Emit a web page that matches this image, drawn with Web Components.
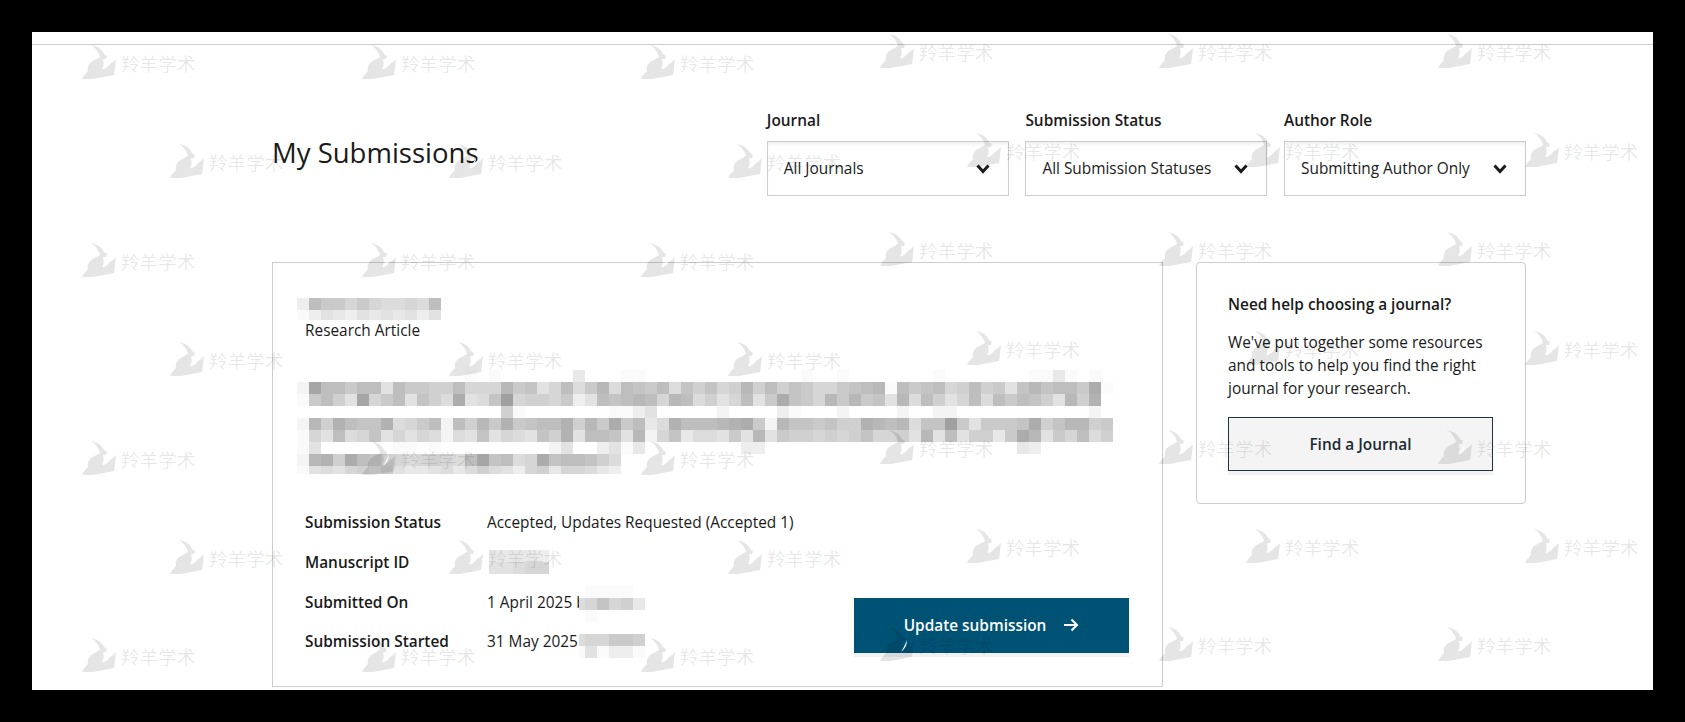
<!DOCTYPE html>
<html lang="en">
<head>
<meta charset="utf-8">
<title>My Submissions</title>
<style>
  html, body { margin: 0; height: 722px; overflow: hidden; background: #000; }
  body { font-family: "Open Sans", "Noto Sans", sans-serif; color: #1a1a1a; }
</style>
</head>
<body>
<page-sheet>
  <page-head slot="head"></page-head>
  <submission-card slot="main"></submission-card>
  <help-card slot="side"></help-card>
</page-sheet>
<script>
// grey ramp for the pixelated blocks: 0-f go from dark to light, w is white
const MOSAIC_KEYS = "0123456789abcdef";
function mosaicColor(ch) {
  const i = MOSAIC_KEYS.indexOf(ch);
  if (i < 0) return "#fff";
  const g = 160 + i * 6;
  return `rgb(${g},${g},${g})`;
}

// title block, one string per row of the pixelated text
const TITLE_ROWS = [
  "wwwwwwwwwwwwwwfwfwwwwwwcwwwffwwwwwwwwwwwwwfwwfwwwwwwwfwwwwwwwffcfwfw",
  "e155755b5778859994 76b95a74a5675a68 6984858679976 54f5765985 87b6465572f",
  "f758b1975b68a2ba6098897db56545945a 8b95b7267947476b4a58b95a57568b483w",
  "wwwwwwwwwwwwwwwww8fwwwwwwwffdbwwwwwewwwwdfwwwewwwwewweewwwwwwwwwwwew",
  "e4835663a975e58473765538 47275ca355 54327e466768834 54a6607b7776286 4487",
  "f9b5a96b9b9aeab6b9ab683b556b4e96ca ab7b4b788989869 98b4b5b88c724b7 95a8",
  "fbwwwwwwffwfwwwwwwwwwebwwdbfcwwwwwwwwddwwwwwwwwwwwwwwwwwwwwwcdwwwwww",
  "e43825689a989a5165a92655 68a",
  "fbab9897bccbaca8abd98c99acd",
].map((r) => r.replace(/ /g, "")).join(" ");

class BlurMosaic extends HTMLElement {
  connectedCallback() {
    const rows = (this.getAttribute("rows") || "").trim().split(/\s+/);
    const heights = (this.getAttribute("heights") || "").split(" ").map(Number);
    const cell = Number(this.getAttribute("cell") || 12);
    const first = Number(this.getAttribute("first") || cell);
    const cols = Math.max(...rows.map((r) => r.length));
    const cells = rows.map((r) => r.padEnd(cols, "w").split("")
      .map((c) => `<i style="background:${mosaicColor(c)}"></i>`).join("")).join("");
    this.attachShadow({ mode: "open" }).innerHTML = `
      <style>
        :host { display: block; }
        div {
          display: grid;
          width: max-content;
          filter: blur(0.4px);
          grid-template-columns: ${first}px repeat(${cols - 1}, ${cell}px);
          grid-template-rows: ${rows.map((r, i) => (heights[i] || cell) + "px").join(" ")};
        }
      </style>
      <div>${cells}</div>
    `;
  }
}
customElements.define("blur-mosaic", BlurMosaic);

class WmStamp extends HTMLElement {
  constructor() {
    super();
    this.attachShadow({ mode: "open" }).innerHTML = `
      <style>
        :host {
          position: absolute;
          display: flex;
          align-items: center;
          gap: 5px;
          height: 34px;
          white-space: nowrap;
        }
        span {
          font: 400 18.6px/1 "Noto Sans CJK SC", sans-serif;
          color: rgba(0, 0, 0, 0.1);
          margin-top: 2px;
        }
        svg { display: block; }
      </style>
      <svg width="36" height="34" viewBox="0 0 36 34">
        <path fill="rgba(0,0,0,0.1)" d="M11 0C17 1 22 4 24 9L27 11 26 14 23 14C24 18 24 21 22 24 25 24 28 22 30 19 32 18 34 16 36 14 35 20 35 26 34 30L13 34 2 34C3 31 6 28 8 26 7 23 8 20 11 17 14 15 17 14 20 12 19 8 16 3 11 0Z"/>
        <path fill="rgba(255,255,255,0.95)" d="M29 13c0 5-2 9-6 12 2-3 4-7 6-12z"/>
      </svg>
      <span>羚羊学术</span>
    `;
  }
}
customElements.define("wm-stamp", WmStamp);

// the watermark is two offset tilings, the right one sits 11px higher
class WmLayer extends HTMLElement {
  constructor() {
    super();
    this.attachShadow({ mode: "open" }).innerHTML = `
      <style>
        :host { position: absolute; inset: 0; display: block; overflow: hidden; pointer-events: none; }
      </style>
    `;
  }

  connectedCallback() {
    const groups = [
      { a: [80, 360, 639], b: [168, 447, 726], top: 45 },
      { a: [878, 1157, 1436], b: [965, 1244, 1523], top: 34 },
    ];
    groups.forEach((g) => {
      for (let r = 0; r < 7; r++) {
        (r % 2 ? g.b : g.a).forEach((x) => {
          const s = document.createElement("wm-stamp");
          s.style.left = `${x - 32}px`;
          s.style.top = `${Math.round(g.top + r * 98.9) - 32}px`;
          this.shadowRoot.appendChild(s);
        });
      }
    });
  }
}
customElements.define("wm-layer", WmLayer);

class PageSheet extends HTMLElement {
  constructor() {
    super();
    this.attachShadow({ mode: "open" }).innerHTML = `
      <style>
        :host {
          position: relative;
          display: block;
          box-sizing: border-box;
          width: 1621px;
          height: 658px;
          margin: 32px 0 0 32px;
          background: #fff;
          overflow: hidden;
        }
        .rule { height: 12px; border-bottom: 1px solid #ccc; }
        .wrap { width: 1254px; margin-left: 240px; }
        .cols { display: flex; gap: 33px; align-items: flex-start; }
      </style>
      <div class="rule"></div>
      <div class="wrap">
        <slot name="head"></slot>
        <div class="cols">
          <slot name="main"></slot>
          <slot name="side"></slot>
        </div>
      </div>
      <wm-layer></wm-layer>
    `;
  }
}
customElements.define("page-sheet", PageSheet);

class FilterSelect extends HTMLElement {
  constructor() {
    super();
    this.attachShadow({ mode: "open" }).innerHTML = `
      <style>
        :host { display: block; width: 242px; }
        label {
          display: block;
          height: 19px;
          margin-bottom: 11px;
          font-size: 15.4px;
          line-height: 19px;
          font-weight: 600;
          color: #1a1a1a;
        }
        .box {
          box-sizing: border-box;
          height: 55px;
          padding: 0 16px;
          display: flex;
          align-items: center;
          justify-content: space-between;
          border: 1px solid #ccc;
          background: #fff;
          box-shadow: inset 0 4px 4px -2px #eee;
          font-size: 15.4px;
          color: #1a1a1a;
        }
        svg { display: block; margin-right: 2px; }
      </style>
      <label></label>
      <div class="box">
        <span></span>
        <svg width="14" height="10" viewBox="0 0 14 10"><path d="M1.5 1.5 7 7.5l5.5-6" fill="none" stroke="#1a1a1a" stroke-width="3"/></svg>
      </div>
    `;
  }

  connectedCallback() {
    this.shadowRoot.querySelector("label").textContent = this.getAttribute("label");
    this.shadowRoot.querySelector("span").textContent = this.getAttribute("value");
  }
}
customElements.define("filter-select", FilterSelect);

class PageHead extends HTMLElement {
  constructor() {
    super();
    this.attachShadow({ mode: "open" }).innerHTML = `
      <style>
        :host {
          display: flex;
          justify-content: space-between;
          padding: 66px 0 66px;
        }
        h1 {
          margin: 0;
          padding-top: 23px;
          font-size: 27.5px;
          line-height: 38px;
          font-weight: 400;
          color: #1a1a1a;
        }
        .filters { display: flex; gap: 16.6px; }
      </style>
      <h1>My Submissions</h1>
      <div class="filters">
        <filter-select label="Journal" value="All Journals"></filter-select>
        <filter-select label="Submission Status" value="All Submission Statuses"></filter-select>
        <filter-select label="Author Role" value="Submitting Author Only"></filter-select>
      </div>
    `;
  }
}
customElements.define("page-head", PageHead);

class DetailRow extends HTMLElement {
  constructor() {
    super();
    this.attachShadow({ mode: "open" }).innerHTML = `
      <style>
        :host {
          display: grid;
          grid-template-columns: 182px auto;
          align-items: center;
          height: 39.67px;
          font-size: 15.4px;
          line-height: 21px;
          color: #1a1a1a;
        }
        b { font-weight: 600; }
        .val { position: relative; height: 21px; white-space: nowrap; }
        ::slotted(blur-mosaic) { position: absolute; }
      </style>
      <b></b>
      <div class="val"><span></span><slot></slot></div>
    `;
  }

  connectedCallback() {
    this.shadowRoot.querySelector("b").textContent = this.getAttribute("label");
    this.shadowRoot.querySelector("span").textContent = this.getAttribute("value") || "";
  }
}
customElements.define("detail-row", DetailRow);

class ActionButton extends HTMLElement {
  constructor() {
    super();
    this.attachShadow({ mode: "open" }).innerHTML = `
      <style>
        :host { display: block; }
        button {
          all: unset;
          box-sizing: border-box;
          width: 100%;
          height: 100%;
          display: flex;
          align-items: center;
          justify-content: center;
          gap: 17px;
          font-family: "Open Sans", sans-serif;
          font-size: 15.4px;
          font-weight: 600;
          box-shadow: 0 4px 0 #f2f2f2;
        }
        .btn-primary { background: #005274; color: #fff; }
        .btn-secondary { background: #f4f4f4; color: #1c2b33; border: 1px solid #1c3340; }
      </style>
      <button><slot></slot></button>
    `;
  }

  connectedCallback() {
    this.shadowRoot.querySelector("button").className = `btn-${this.getAttribute("variant") || "primary"}`;
  }
}
customElements.define("action-button", ActionButton);

class SubmissionCard extends HTMLElement {
  constructor() {
    super();
    this.attachShadow({ mode: "open" }).innerHTML = `
      <style>
        :host {
          display: block;
          box-sizing: border-box;
          width: 891px;
          height: 425px;
          padding: 35px 33px 0 32px;
          border: 1px solid #ccc;
          background: #fff;
        }
        .name { margin-left: -8px; }
        .type { height: 22px; font-size: 15.4px; line-height: 22px; color: #1a1a1a; }
        .title { margin: 28px 0 29px -8px; }
        .bottom { display: flex; justify-content: space-between; align-items: flex-end; }
        action-button { width: 275px; height: 55px; margin-bottom: 9px; }
        svg { display: block; }
      </style>
      <blur-mosaic class="name" heights="12 10" rows="d577979aa9a5 fdbcdbcbcbdb"></blur-mosaic>
      <div class="type">Research Article</div>
      <blur-mosaic class="title" heights="12 12 12 12 12 12 12 12 8" rows="${TITLE_ROWS}"></blur-mosaic>
      <div class="bottom">
        <div>
          <detail-row label="Submission Status" value="Accepted, Updates Requested (Accepted 1)"></detail-row>
          <detail-row label="Manuscript ID"><blur-mosaic style="left:2px;top:-2px" rows="ccccd bba99"></blur-mosaic></detail-row>
          <detail-row label="Submitted On" value="1 April 2025 b"><blur-mosaic style="left:92px;top:-6px" first="6" rows="wffffw a9698c wfwwww"></blur-mosaic></detail-row>
          <detail-row label="Submission Started" value="31 May 2025"><blur-mosaic style="left:92px;top:3px" first="6" rows="a99778 fbfddf"></blur-mosaic></detail-row>
        </div>
        <action-button variant="primary">Update submission
          <svg width="16" height="14" viewBox="0 0 16 14"><path d="M1 7h13M8.5 1.5 14 7l-5.5 5.5" fill="none" stroke="#fff" stroke-width="2"/></svg>
        </action-button>
      </div>
    `;
  }
}
customElements.define("submission-card", SubmissionCard);

class HelpCard extends HTMLElement {
  constructor() {
    super();
    this.attachShadow({ mode: "open" }).innerHTML = `
      <style>
        :host {
          display: block;
          box-sizing: border-box;
          width: 330px;
          height: 242px;
          padding: 31px 31px 0 31px;
          border: 1px solid #ccc;
          border-radius: 4px;
          background: #fff;
        }
        h2 { margin: 0 0 15px; font-size: 15.4px; line-height: 22px; font-weight: 600; color: #1a1a1a; }
        p { margin: 0 0 17px; font-size: 15.4px; line-height: 23px; color: #1a1a1a; }
        action-button { width: 265px; height: 54px; }
      </style>
      <h2>Need help choosing a journal?</h2>
      <p>We've put together some resources and tools to help you find the right journal for your research.</p>
      <action-button variant="secondary">Find a Journal</action-button>
    `;
  }
}
customElements.define("help-card", HelpCard);
</script>
</body>
</html>
